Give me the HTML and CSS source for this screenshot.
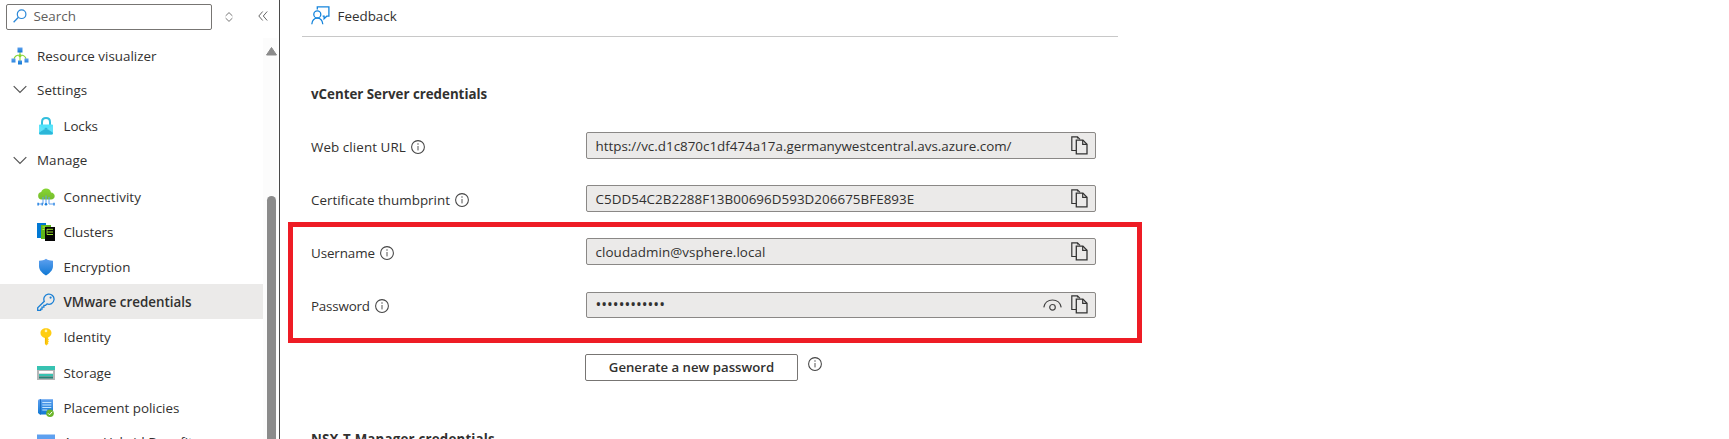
FILE: index.html
```html
<!DOCTYPE html>
<html lang="en">
<head>
<meta charset="utf-8">
<title>VMware credentials</title>
<link rel="stylesheet" href="styles.css">
</head>
<body>
<svg class="defs" aria-hidden="true">
  <defs>
    <linearGradient id="blue" x1="0" y1="0" x2="0" y2="1"><stop offset="0" stop-color="#5ea0ef"/><stop offset="1" stop-color="#0f78d4"/></linearGradient>
    <linearGradient id="green" x1="0" y1="0" x2="0" y2="1"><stop offset="0" stop-color="#86d633"/><stop offset="1" stop-color="#76bc2d"/></linearGradient>
    <symbol id="info" viewBox="0 0 14 14"><circle cx="7" cy="7" r="6.4" fill="none" stroke="#444" stroke-width="1.05"/><path d="M7 6v4.400" stroke="#555" stroke-width="1"/><circle cx="7" cy="4" r=".75" fill="#555"/></symbol>
    <symbol id="copy" viewBox="0 0 17 19"><path d="M5 14.500H.8V.8h5.700l2.500 2.600M6.500.8v1.600" fill="none" stroke="#333" stroke-width="1.200"/><path d="M5.300 4.100h6.600l4.100 4.200v9.600H5.300z" fill="#ebeae9" stroke="#333" stroke-width="1.300"/><path d="M11.700 4v4.400h4.300" fill="none" stroke="#333" stroke-width="1.200"/></symbol>
  </defs>
</svg>
<div class="app">
  <aside class="sidebar">
    <div class="search-row">
      <div class="search">
        <svg width="14" height="14" viewBox="0 0 14 14"><path d="M5.200 8.500L.6 13.200" stroke="#2b88d8" stroke-width="1.300" fill="none"/><circle cx="8.600" cy="5.200" r="4.300" fill="none" stroke="#2b88d8" stroke-width="1.200"/></svg>
        <span>Search</span>
      </div>
      <svg class="sort" width="8" height="10" viewBox="0 0 8 10"><path d="M.6 3.900L4 .6l3.400 3.300M.6 6.100L4 9.400l3.400-3.300" fill="none" stroke="#777" stroke-width="1"/></svg>
      <svg class="collapse" width="10" height="10" viewBox="0 0 10 10"><path d="M4.700.5L.8 5l3.900 4.500M9.200.5L5.300 5l3.900 4.500" fill="none" stroke="#666" stroke-width="1"/></svg>
    </div>
    <div class="side-body">
      <nav class="nav">
        <a class="item top h35">
          <svg width="18" height="18" viewBox="0 0 18 18"><path d="M9 5v9M3 13c0-4 3-5 6-5s6 1 6 5" fill="none" stroke="#86d633" stroke-width="1.100"/><path d="M6.500.5h5v5h-5z" fill="url(#blue)"/><circle cx="9" cy="8.700" r="1.500" fill="#86d633"/><path d="M.5 11.500h4v4h-4zM7 13.500h4v4H7zM13.500 11.500h4v4h-4z" fill="url(#blue)"/></svg>
          <span>Resource visualizer</span></a>
        <a class="item group h33">
          <svg width="14" height="9" viewBox="0 0 14 9"><path d="M.7 1.200L7 7.500l6.300-6.300" fill="none" stroke="#555" stroke-width="1.200"/></svg>
          <span class="wide">Settings</span></a>
        <a class="item h39">
          <svg width="18" height="18" viewBox="0 0 18 18"><path d="M5 8V5.200C5 2.800 6.600 1.100 9 1.100s4 1.700 4 4.100V8" fill="none" stroke="#32bedd" stroke-width="2"/><path d="M3 7.500h12a1 1 0 0 1 1 1V16a1.500 1.500 0 0 1-1.500 1.500h-11A1.500 1.500 0 0 1 2 16V8.500a1 1 0 0 1 1-1z" fill="#50e2fa"/><path d="M2 16l7-5.500 7 5.500a1.500 1.500 0 0 1-1.500 1.500h-11A1.500 1.500 0 0 1 2 16z" fill="#2cb6d8"/><path d="M2 8.500l7 4 7-4V15l-7-3-7 3z" fill="#6fe4f8" opacity=".5"/></svg>
          <span class="snug">Locks</span></a>
        <a class="item group h30">
          <svg width="14" height="9" viewBox="0 0 14 9"><path d="M.7 1.200L7 7.500l6.300-6.300" fill="none" stroke="#555" stroke-width="1.200"/></svg>
          <span class="wide">Manage</span></a>
        <a class="item h36 gap">
          <svg width="18" height="18" viewBox="0 0 18 18"><path d="M4.500 11.500a3.800 3.800 0 0 1-.3-7.500C4.900 1.800 6.700.4 9 .4c2.700 0 4.500 1.600 5 4 2.200.2 3.700 1.600 3.700 3.600s-1.500 3.500-3.700 3.500z" fill="url(#green)"/><path d="M9 7.500V17M6 9v7H1.500M12 9v7h4.500" fill="none" stroke="#5ea0ef" stroke-width="1"/><circle cx="9" cy="16.300" r="1.300" fill="#1d80dc"/><path d="M.3 14.700H2v2.700H.3zM4.500 14.700H6v2.700H4.500zM16.200 14.700h1.600v2.700h-1.600z" fill="#3b8ee4"/></svg>
          <span class="wide">Connectivity</span></a>
        <a class="item h34">
          <svg width="18" height="18" viewBox="0 0 18 18"><path d="M0 0h9v15H0z" fill="#0078d4"/><path d="M4 2h10v14H4z" fill="#5fb61a"/><path d="M5.500 4h3M5.500 6.500h2" stroke="#b4ec36" stroke-width="1"/><path d="M8 4h10v14H8z" fill="#050505"/><path d="M10 6.300h6M10 9h6M10 11.500h6" stroke="#9be22c" stroke-width="1"/><path d="M10 6v5.500" stroke="#9be22c" stroke-width=".8"/></svg>
          <span class="snug">Clusters</span></a>
        <a class="item h35">
          <svg width="18" height="18" viewBox="0 0 18 18"><path d="M9 .8c2 1.700 4 1.800 7 1.900v5.500c0 4.300-4.200 7.600-7 9.300-2.800-1.700-7-5-7-9.300V2.700C5 2.600 7 2.500 9 .8z" fill="url(#blue)"/></svg>
          <span>Encryption</span></a>
        <a class="item h35 selected">
          <svg width="18" height="18" viewBox="0 0 18 18"><path d="M7.300 8.300A5.100 5.100 0 1 1 10 10.900L8.600 12.300H6.900v1.900H5v1.900H3.600v1.300H.7v-2.700z" fill="none" stroke="#1b80d5" stroke-width="1.300"/><circle cx="13.600" cy="4.600" r="1.100" fill="#1b80d5"/></svg>
          <span>VMware credentials</span></a>
        <a class="item h36">
          <svg width="18" height="18" viewBox="0 0 18 18"><path d="M9 .3c3.200 0 5.500 2 5.500 4.600 0 2.200-1.600 3.600-3.400 4.500v1.200l.8.900-.9 1 .9 1.100-1 1.100.6.900L9.400 17.600 7.900 16V9.900C5 9 3.500 7.400 3.500 4.900 3.500 2.200 5.800.3 9 .3z" fill="#ffcd12"/><circle cx="9" cy="2.900" r="1.300" fill="#fff2b0"/><path d="M8.700 9.500v6.200" stroke="#e8a900" stroke-width=".7"/></svg>
          <span>Identity</span></a>
        <a class="item h36">
          <svg width="18" height="18" viewBox="0 0 18 18"><path d="M0 2h18v14H0z" fill="#b4b6b7"/><path d="M0 2h18v4H0z" fill="#37c2b1"/><path d="M2 7h14v2.500H2z" fill="#fff"/><path d="M2 10h14v2H2z" fill="#37c2b1"/><path d="M2 12.500h14v2H2z" fill="#258277"/></svg>
          <span>Storage</span></a>
        <a class="item h34">
          <svg width="18" height="18" viewBox="0 0 18 18"><path d="M2 .3h14v15.200H2.800L1 14V1.300z" fill="url(#blue)"/><path d="M3.500.3v15.200" stroke="#1c6fc4" stroke-width="1"/><path d="M5.300 3.500h9M5.300 6h9M5.300 8.500h9M5.300 11h5" stroke="#c3e5ff" stroke-width="1.100"/><circle cx="13" cy="14.200" r="3.800" fill="#6bb52a"/><path d="M11 14.300l1.500 1.500 2.700-3" fill="none" stroke="#fff" stroke-width="1"/></svg>
          <span>Placement policies</span></a>
        <a class="item h34">
          <svg width="18" height="18" viewBox="0 0 18 18"><path d="M0 1.500h18v15H0z" fill="#5ea0ef"/></svg>
          <span>Azure Hybrid Benefit</span></a>
      </nav>
      <div class="scrollbar">
        <svg width="11" height="9" viewBox="0 0 11 9"><path d="M5.500.5L10.500 8H.5z" fill="#8b8b8b" stroke="#8b8b8b" stroke-linejoin="round"/></svg>
        <div class="thumb"></div>
      </div>
    </div>
  </aside>
  <main class="main">
    <div class="toolbar">
      <svg width="19" height="19" viewBox="0 0 19 19"><path d="M6.300 3.400V.9h11.600v9.300h-2.200l-2.600 2.500v-2.500h-1.500" fill="none" stroke="#1484dc" stroke-width="1.300"/><circle cx="6.300" cy="8.400" r="3.500" fill="none" stroke="#1484dc" stroke-width="1.300"/><path d="M.8 18.200c.4-3.900 2.500-6.100 5.500-6.100s5.100 2.200 5.500 6.100" fill="none" stroke="#1484dc" stroke-width="1.300"/></svg>
      <span>Feedback</span>
    </div>
    <h2 class="heading">vCenter Server credentials</h2>
    <div class="fields">
      <div class="field">
        <label><span class="wide">Web client URL</span> <svg class="info"><use href="#info"/></svg></label>
        <div class="box"><span>https://vc.d1c870c1df474a17a.germanywestcentral.avs.azure.com/</span><svg class="copy"><use href="#copy"/></svg></div>
      </div>
      <div class="field">
        <label>Certificate thumbprint <svg class="info"><use href="#info"/></svg></label>
        <div class="box"><span class="thumbprint">C5DD54C2B2288F13B00696D593D206675BFE893E</span><svg class="copy"><use href="#copy"/></svg></div>
      </div>
      <div class="field">
        <label><span class="snug">Username</span> <svg class="info"><use href="#info"/></svg></label>
        <div class="box"><span class="user">cloudadmin@vsphere.local</span><svg class="copy"><use href="#copy"/></svg></div>
      </div>
      <div class="field">
        <label><span class="tight">Password</span> <svg class="info"><use href="#info"/></svg></label>
        <div class="box short"><span class="dots">••••••••••••</span>
          <svg class="eye" width="19" height="12" viewBox="0 0 19 12"><path d="M.8 8.300C1.500 4 5 1 9.500 1s8 3 8.700 7.300" fill="none" stroke="#444" stroke-width="1.200"/><circle cx="9.500" cy="8.300" r="2.800" fill="none" stroke="#444" stroke-width="1.200"/></svg>
          <svg class="copy"><use href="#copy"/></svg></div>
      </div>
      <div class="highlight"></div>
    </div>
    <div class="actions">
      <button class="generate">Generate a new password</button>
      <svg class="info"><use href="#info"/></svg>
    </div>
    <h2 class="heading nsx">NSX-T Manager credentials</h2>
  </main>
</div>
</body>
</html>
```
FILE: styles.css
```css
* { box-sizing: border-box; }
body {
  margin: 0;
  background: #fff;
  color: #323130;
  font: 13.4px/18px "Open Sans", "Noto Sans", sans-serif;
}
svg { display: block; flex: none; }
.defs { position: absolute; width: 0; height: 0; }
.app { display: flex; height: 439px; overflow: hidden; }

.sidebar {
  width: 280px;
  flex: none;
  border-right: 1px solid #4a4a4a;
  display: flex;
  flex-direction: column;
}
.search-row { height: 38px; flex: none; display: flex; padding: 4px 0 0 6px; }
.search {
  width: 206px;
  height: 26px;
  border: 1px solid #777573;
  border-radius: 2px;
  display: flex;
  align-items: center;
  gap: 6.5px;
  padding: 0 6px 2px;
  color: #605e5c;
}
.sort { margin: 8px 0 0 13px; }
.collapse { margin: 7px 0 0 24.500px; }
.side-body { flex: 1; min-height: 0; display: flex; }
.nav { width: 263px; overflow: hidden; }
.item {
  display: flex;
  align-items: center;
  gap: 8.5px;
  padding-left: 37px;
  white-space: nowrap;
}
.item.top { padding-left: 11px; gap: 8px; }
.item.group { padding-left: 12.500px; gap: 10.500px; }
.h30 { height: 30px; }
.h33 { height: 33px; }
.h34 { height: 34px; }
.h35 { height: 35px; }
.h36 { height: 36px; }
.h39 { height: 39px; }
.gap { margin-top: 4px; }
.selected { background: #ebeae9; font-weight: 600; }
.snug { letter-spacing: -.1px; }
.tight { letter-spacing: -.2px; }
.wide { letter-spacing: .08px; }
.user { letter-spacing: .08px; }
.thumbprint { letter-spacing: .04px; }
.scrollbar { width: 14px; background: #fcfcfc; padding: 9px 1px 0 3px; }
.thumb { width: 9px; height: 400px; margin: 140px 0 0 1px; border-radius: 5px; background: #8b8b8b; }

.main { flex: 1; padding-left: 22px; }
.toolbar {
  width: 816px;
  height: 37px;
  border-bottom: 1px solid #c8c8c8;
  display: flex;
  align-items: center;
  gap: 7.5px;
  padding: 0 0 6px 9px;
}
.toolbar span { padding-top: 1px; }
.heading { margin: 48px 0 0 9px; font-size: 13.3px; line-height: 18px; font-weight: 700; }
.fields { position: relative; padding: 29px 0 0 9px; display: grid; gap: 26px; }
.field { display: flex; align-items: center; height: 27px; }
label { width: 275px; flex: none; display: flex; align-items: center; gap: 5px; padding-top: 2px; }
.info { width: 14px; height: 14px; }
.box {
  width: 510px;
  height: 27px;
  border: 1px solid #8a8886;
  border-radius: 2px;
  background: #ebeae9;
  display: flex;
  align-items: center;
  justify-content: space-between;
  padding: 0 7.500px 0 8.500px;
}
.short { height: 26px; }
.dots { font-size: 15.4px; }
.copy { width: 17px; height: 19px; }
.eye { margin: 0 8.500px 0 auto; }
.highlight {
  position: absolute;
  left: -14px;
  top: 119px;
  width: 854px;
  height: 121px;
  border: 5px solid #ee1c25;
}
.actions { display: flex; padding: 36px 0 0 283px; gap: 10px; }
.generate {
  width: 213px;
  height: 27px;
  border: 1px solid #777573;
  border-radius: 2px;
  background: #fff;
  color: #323130;
  font: 600 13.2px/18px "Open Sans", "Noto Sans", sans-serif;
  padding: 0 0 1px;
}
.actions .info { margin-top: 3px; }
.nsx { margin-top: 49px; letter-spacing: .2px; }
```
